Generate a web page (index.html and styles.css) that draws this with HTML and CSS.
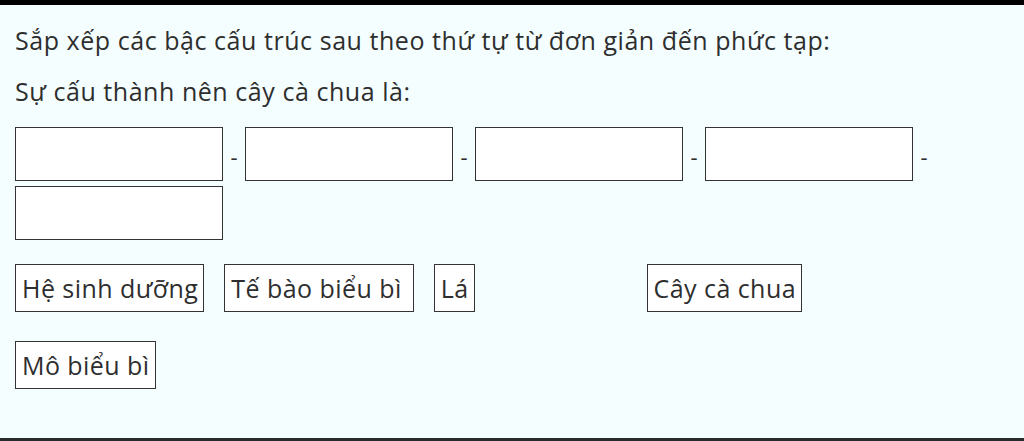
FILE: index.html
```html
<!DOCTYPE html>
<html lang="vi">
<head>
<meta charset="utf-8">
<title>Sắp xếp</title>
<link rel="stylesheet" href="styles.css">
</head>
<body>
<main class="page">
  <p class="line first">Sắp xếp các bậc cấu trúc sau theo thứ tự từ đơn giản đến phức tạp:</p>
  <p class="line second">Sự cấu thành nên cây cà chua là:</p>
  <div class="slots">
    <div class="slot-item"><span class="slot"></span><span class="dash">-</span></div>
    <div class="slot-item"><span class="slot"></span><span class="dash">-</span></div>
    <div class="slot-item"><span class="slot"></span><span class="dash">-</span></div>
    <div class="slot-item"><span class="slot"></span><span class="dash">-</span></div>
    <div class="slot-item"><span class="slot"></span></div>
  </div>
  <div class="chips">
    <span class="chip">Hệ sinh dưỡng</span>
    <span class="chip wide">Tế bào biểu bì</span>
    <span class="chip">Lá</span>
    <span class="chip placeholder">Cơ quan</span>
    <span class="chip">Cây cà chua</span>
    <span class="chip">Mô biểu bì</span>
  </div>
</main>
</body>
</html>
```
FILE: styles.css
```css
* { box-sizing: border-box; }
html, body { margin: 0; padding: 0; }
body {
  background: #f4feff;
  font-family: "Open Sans", "Noto Sans", sans-serif;
  color: #2e2e2e;
}
.page {
  width: 100%;
  height: 441px;
  border-top: 5px solid #000;
  border-bottom: 3px solid #2a2a2a;
  padding: 0 15px;
}
.line {
  margin: 0;
  font-size: 25px;
  letter-spacing: 0.55px;
  line-height: 34px;
}
.first { margin-top: 18px; }
.second { margin-top: 17px; }
.slots {
  margin-top: 19px;
  width: 935px;
  display: flex;
  flex-wrap: wrap;
  row-gap: 5px;
}
.slot-item {
  display: flex;
  align-items: center;
}
.slot {
  display: block;
  width: 208px;
  height: 54px;
  background: #fff;
  border: 1px solid #333;
}
.dash {
  width: 22px;
  text-align: center;
  font-size: 22px;
  line-height: 26px;
  padding-top: 3px;
}
.chips {
  margin-top: 24px;
  width: 935px;
  display: flex;
  flex-wrap: wrap;
  column-gap: 20px;
  row-gap: 29px;
}
.chip {
  display: block;
  background: #fff;
  border: 1px solid #333;
  padding: 6px 5px 6px 6px;
  font-size: 25px;
  letter-spacing: 0.45px;
  line-height: 34px;
}
.chip.wide { padding-right: 11px; }
.placeholder {
  visibility: hidden;
  width: 132px;
}
```
